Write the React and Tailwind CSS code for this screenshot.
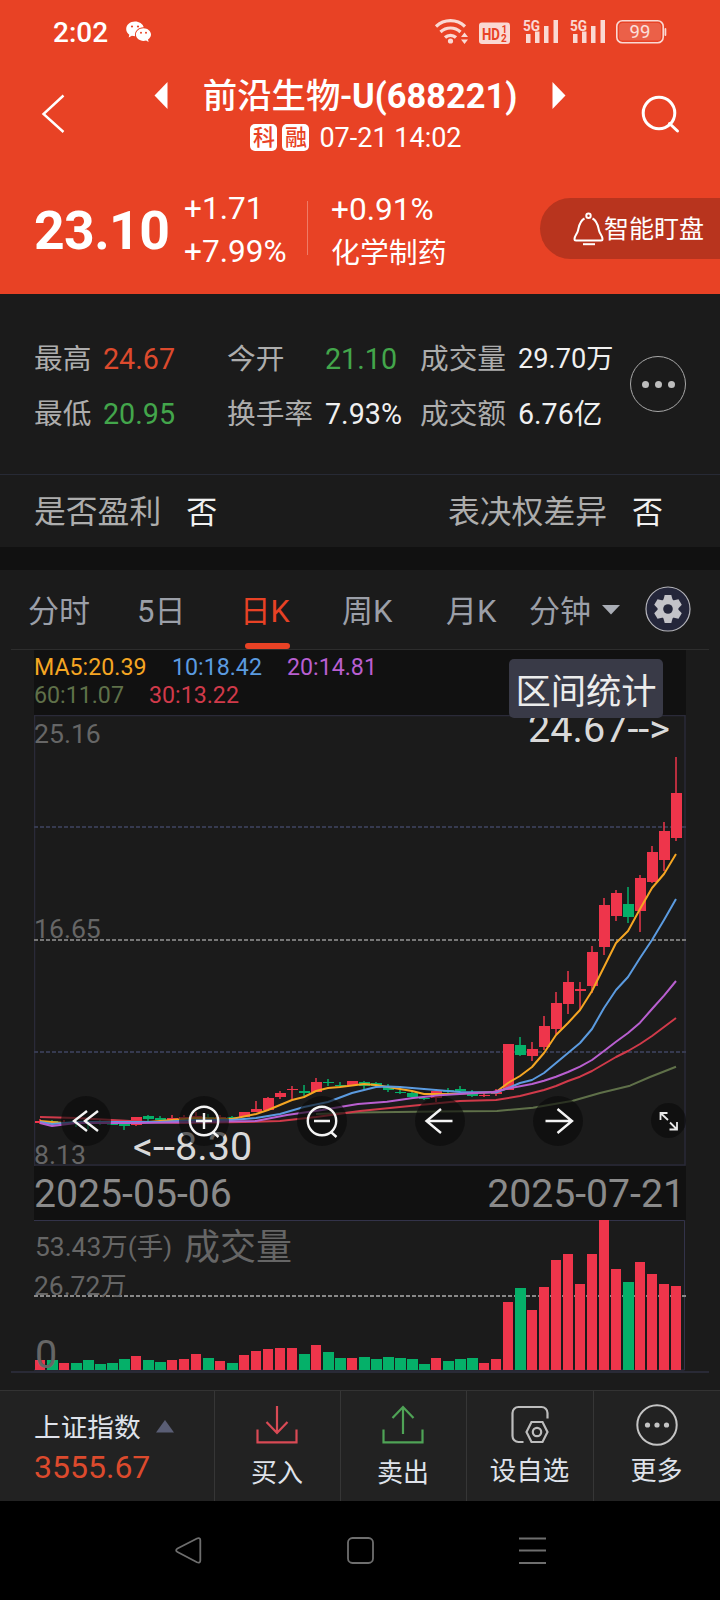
const UP = "#ee354b";
const DOWN = "#05b069";

// [up, bodyTop, bodyBottom, wickTop, wickBottom, volumeHeight]
const days = [
  [1, 1121, 1123, 1119, 1124, 10],
  [0, 1121, 1123, 1120, 1124, 10],
  [1, 1122, 1124, 1120, 1125, 7],
  [0, 1121, 1123, 1119, 1127, 7],
  [0, 1122, 1124, 1120, 1129, 10],
  [0, 1122, 1124, 1120, 1125, 6],
  [0, 1123, 1125, 1121, 1125, 7],
  [0, 1124, 1126, 1122, 1130, 11],
  [1, 1117, 1125, 1117, 1126, 14],
  [0, 1116, 1119, 1115, 1121, 10],
  [0, 1118, 1120, 1116, 1121, 8],
  [1, 1118, 1120, 1115, 1121, 10],
  [1, 1117, 1119, 1115, 1120, 11],
  [1, 1116, 1119, 1112, 1120, 16],
  [0, 1117, 1119, 1114, 1121, 12],
  [1, 1117, 1119, 1115, 1120, 9],
  [0, 1117, 1119, 1116, 1120, 7],
  [1, 1112, 1117, 1112, 1117, 15],
  [1, 1109, 1112, 1101, 1112, 19],
  [1, 1098, 1110, 1097, 1111, 21],
  [1, 1093, 1097, 1091, 1099, 22],
  [1, 1089, 1090, 1086, 1099, 22],
  [0, 1091, 1093, 1085, 1096, 16],
  [1, 1082, 1092, 1078, 1092, 25],
  [0, 1082, 1083, 1079, 1086, 18],
  [0, 1085, 1086, 1082, 1087, 12],
  [1, 1081, 1085, 1081, 1086, 12],
  [0, 1082, 1086, 1081, 1089, 13],
  [0, 1083, 1086, 1082, 1087, 11],
  [0, 1087, 1090, 1084, 1092, 13],
  [0, 1092, 1093, 1090, 1094, 12],
  [0, 1093, 1097, 1092, 1099, 11],
  [0, 1098, 1099, 1096, 1100, 6],
  [1, 1091, 1098, 1091, 1102, 12],
  [0, 1090, 1092, 1088, 1093, 9],
  [0, 1089, 1091, 1086, 1092, 11],
  [0, 1092, 1096, 1090, 1097, 12],
  [1, 1095, 1096, 1093, 1097, 7],
  [1, 1092, 1094, 1089, 1096, 11],
  [1, 1044, 1090, 1044, 1090, 68],
  [0, 1045, 1055, 1037, 1056, 82],
  [1, 1049, 1056, 1042, 1061, 60],
  [1, 1026, 1047, 1016, 1050, 83],
  [1, 1003, 1029, 992, 1034, 110],
  [1, 982, 1004, 971, 1014, 116],
  [1, 989, 991, 982, 1010, 86],
  [1, 952, 986, 946, 993, 116],
  [1, 905, 947, 898, 955, 150],
  [1, 893, 916, 890, 921, 101],
  [0, 904, 917, 887, 923, 88],
  [1, 878, 911, 875, 932, 108],
  [1, 852, 882, 846, 883, 96],
  [1, 831, 860, 822, 871, 86],
  [1, 793, 838, 757, 841, 84],
];

const averages = [
  {
    name: "ma60",
    color: "#5f7049",
    points:
      "316,1114 358,1112.5 436,1111.5 497,1111 533,1107.7 573,1100.7 600,1093 630,1085.7 650,1077 676,1066.7",
  },
  {
    name: "ma30",
    color: "#d03a4a",
    points:
      "40,1117 76,1118 112,1120 148,1122 184,1123 244,1122 280,1121 316,1117 360,1111 400,1107 430,1104 460,1101 496,1100 520,1096 544,1090 556,1086 568,1081 580,1076.7 592,1071 604,1064 616,1057 628,1051 640,1044 652,1036 664,1027 676,1018",
  },
  {
    name: "ma5",
    color: "#f5a623",
    points:
      "40,1121 64,1123 88,1123 112,1122 148,1122 172,1120 196,1118 232,1119 256,1114 268,1110 280,1105 292,1100 304,1097 316,1091 328,1088 340,1087 352,1085.5 364,1084 376,1085 388,1087 400,1089 412,1091 424,1094 448,1094 472,1093 496,1092 508,1083 520,1076 532,1067 544,1053 556,1035 568,1023 580,1010 592,991 604,967 616,943 628,931 640,909 652,888 664,874 676,854",
  },
  {
    name: "ma10",
    color: "#5b9be0",
    points:
      "40,1122 52,1124 76,1122 112,1122 160,1122 196,1120 232,1120 256,1118 280,1114 304,1107 328,1102 352,1093 376,1087 388,1086.5 400,1087 412,1088 436,1090 460,1092 496,1092.5 508,1088 520,1083 532,1080 544,1073 556,1063 568,1053 580,1043 592,1029 604,1008 616,990 628,977 640,958 652,940 664,920 676,899",
  },
  {
    name: "ma20",
    color: "#b95fd0",
    points:
      "40,1123 52,1126 76,1123 140,1123 200,1122 256,1121 287,1115 322,1110 358,1104 387,1101.7 413,1098 443,1095 493,1092 508,1088.5 532,1084 544,1080.7 556,1076.7 568,1072 580,1066.7 592,1060 604,1051 616,1041.7 628,1033 640,1022.7 652,1009 664,995.7 676,981",
  },
];

const chartTools = [
  {
    name: "rewind",
    x: "left-[27px]",
    icon: <path d="M26 15 13 25l13 10M37 15 24 25l13 10" />,
  },
  {
    name: "zoom-in",
    x: "left-[145px]",
    icon: (
      <>
        <circle cx="25" cy="25" r="14.2" />
        <path d="M34.5 36.5l5 4.5M17 25h16M25 17v16" />
      </>
    ),
  },
  {
    name: "zoom-out",
    x: "left-[263px]",
    icon: (
      <>
        <circle cx="25" cy="25" r="14.2" />
        <path d="M34.5 36.5l5 4.5M17 25h16" />
      </>
    ),
  },
  {
    name: "left",
    x: "left-[381px]",
    icon: <path d="M37.5 25H11.5M26 13 11.5 25 26 37" />,
  },
  {
    name: "right",
    x: "left-[499px]",
    icon: <path d="M12.500 25h26M24.500 13 39 25 24.500 37" />,
  },
];

const StatusIcons = () => (
  <svg width="240" height="36" viewBox="430 14 240 36" className="text-white/80">
    {/* Wifi */}
    <g fill="none" stroke="currentColor" strokeWidth="3.2">
      <path d="M436 26.500a21 21 0 0 1 29 0" />
      <path d="M440.500 32a14.500 14.500 0 0 1 20 0" />
      <path d="M445 37.500a8 8 0 0 1 11 0" />
    </g>
    <circle cx="450.5" cy="41" r="2.6" fill="currentColor" />
    <path d="M461 37l3.500-4.500L468 37zM461 39.500l3.500 4.500 3.500-4.500z" fill="currentColor" />
    {/* HD badge */}
    <rect x="479" y="22.5" width="31" height="21.5" rx="3" fill="currentColor" />
    <g fill="#e84225" fontWeight="700">
      <text x="482" y="39.5" fontSize="17" textLength="18" lengthAdjust="spacingAndGlyphs">HD</text>
      <text x="501.5" y="32.5" fontSize="10">1</text>
      <text x="501" y="42" fontSize="10">2</text>
    </g>
    {/* Signal bars */}
    {[0, 47].map((dx) => (
      <g key={dx} transform={`translate(${dx} 0)`} fill="currentColor">
        <text x="523" y="30.5" fontSize="15.5" fontWeight="700" textLength="17" lengthAdjust="spacingAndGlyphs">
          5G
        </text>
        <rect x="526" y="34" width="4.5" height="9" />
        <rect x="535" y="31.5" width="4.5" height="11.5" />
        <rect x="544" y="26" width="4.5" height="17" />
        <rect x="553.5" y="20" width="4.5" height="23" />
      </g>
    ))}
    {/* Battery */}
    <rect x="616.8" y="20.8" width="46.4" height="22" rx="5.5" fill="none" stroke="currentColor" strokeWidth="1.6" />
    <rect x="619" y="23" width="42" height="17.5" rx="3.5" fill="#fff" opacity="0.16" />
    <rect x="664.5" y="28" width="1.8" height="8" rx="0.9" fill="currentColor" />
    <text x="640" y="38.2" fontSize="18.5" textAnchor="middle" fill="currentColor">99</text>
  </svg>
);

const WechatIcon = () => (
  <svg width="26" height="22" viewBox="0 0 26 22" fill="#fff">
    <path d="M9 .5C4 .5.2 3.800.2 8c0 2.300 1.200 4.300 3.100 5.700L2.700 16.500l3.200-1.700c1 .3 2 .4 3.200.4-1-5 3.500-9.200 8.600-9C16.800 2.800 13.200.5 9 .5z" />
    <path d="M17.500 7.300c-4.300 0-7.600 2.900-7.600 6.300s3.300 6.300 7.600 6.300c.9 0 1.800-.1 2.600-.4l2.500 1.500-.6-2.400c1.800-1.200 3-3 3-5 0-3.400-3.300-6.300-7.500-6.300z" />
    <g fill="#e84225">
      <circle cx="6" cy="5.500" r="1.100" />
      <circle cx="12" cy="5.500" r="1.100" />
      <circle cx="15" cy="11.700" r="1" />
      <circle cx="20" cy="11.700" r="1" />
    </g>
  </svg>
);

const Header = () => (
  <header className="h-[294px] bg-[#e84225] text-white">
    <div className="h-[64px] pl-[53px] flex items-center">
      <span className="pt-[2px] text-[28px] leading-none font-medium">2:02</span>
      <span className="ml-[18px]">
        <WechatIcon />
      </span>
      <span className="ml-auto mr-[50px]">
        <StatusIcons />
      </span>
    </div>

    <div className="h-[102px] pt-2 flex items-start justify-between">
      <svg width="80" height="84" viewBox="0 72 80 84" fill="none" stroke="#fff" strokeWidth="2.4">
        <path d="M63.5 95.500 43.500 114l20 18" />
      </svg>

      <div className="pt-[4px] flex flex-col items-center">
        <div className="h-[41px] flex items-center gap-[35px]">
          <svg width="14" height="27" viewBox="0 0 14 27" fill="#fff" className="-mt-[3px]">
            <path d="M13.500 0v27L.5 13.500z" />
          </svg>
          <h1 className="text-[34.4px] leading-none font-bold whitespace-nowrap">
            <span className="font-medium">前沿生物-</span>U(688221)
          </h1>
          <svg width="14" height="27" viewBox="0 0 14 27" fill="#fff" className="-mt-[3px]">
            <path d="M.5 0v27l13-13.500z" />
          </svg>
        </div>
        <div className="h-[41px] mr-[8px] flex items-center gap-[5px] text-[27px] leading-none">
          <span className="w-[27px] h-[27px] rounded-[5px] bg-white text-[#e84225] text-[22px] font-medium flex items-center justify-center">
            科
          </span>
          <span className="w-[27px] h-[27px] rounded-[5px] bg-white text-[#e84225] text-[22px] font-medium flex items-center justify-center">
            融
          </span>
          <span className="ml-[5px] pt-[2px]">07-21 14:02</span>
        </div>
      </div>

      <svg width="80" height="84" viewBox="640 72 80 84" fill="none" stroke="#fff" strokeWidth="3">
        <circle cx="659" cy="113" r="15.800" />
        <path d="M669.500 123.500l8 7.500" strokeLinecap="round" />
      </svg>
    </div>

    <div className="h-[128px] pl-[34px] pt-[21px] flex items-start">
      <div className="w-[150px] h-[88px] flex items-center text-[53.500px] tracking-[-0.6px] leading-none font-bold">
        23.10
      </div>
      <div className="w-[123px] text-[31.600px] leading-[43px]">
        <p>+1.71</p>
        <p>+7.99%</p>
      </div>
      <div className="w-px h-[54px] mt-[14px] bg-white/30"></div>
      <div className="ml-[23px] w-[209px] text-[31.600px] leading-[43px]">
        <p className="pt-px">+0.91%</p>
        <p className="pt-px text-[28.900px]">化学制药</p>
      </div>
      <div className="flex-1 h-[61px] mt-[11px] rounded-l-full bg-[#b8341e] pl-[33px] flex items-center whitespace-nowrap">
        <svg width="31" height="34" viewBox="573 211 31 34" fill="none" stroke="#fff" strokeWidth="2">
          <circle cx="588.500" cy="214.800" r="2.200" />
          <path d="M584.500 217.500c-5 2.500-5.500 8-6.500 12-.8 3.500-3.500 5.500-3.500 8.500 0 1 .5 1.500 1.500 1.500h25c1 0 1.500-.5 1.500-1.500 0-3-2.700-5-3.500-8.500-1-4-1.500-9.500-6.500-12" />
          <path d="M583 243.200h12" />
        </svg>
        <span className="pt-[2px] text-[25px] leading-none">智能盯盘</span>
      </div>
    </div>
  </header>
);

const statRows = [
  ["最高", "24.67", "text-[#dc4a2d]", "今开", "21.10", "text-[#43a64b]", "成交量", "29.70万", "text-[27.2px]"],
  ["最低", "20.95", "text-[#43a64b]", "换手率", "7.93%", "text-[#f0f0f0]", "成交额", "6.76亿", "text-[28.6px]"],
];

const Summary = () => (
  <section className="bg-[#1b1b1b]">
    <div className="h-[180px] pl-[34px] flex">
      <div className="w-[596px] pt-[38px]">
        {statRows.map((row) => (
          <div
            key={row[0]}
            className="h-[55px] flex items-center text-[28.700px] leading-none text-[#adadad] whitespace-nowrap"
          >
            <span className="w-[69px]">{row[0]}</span>
            <span className={`w-[124px] ${row[2]}`}>{row[1]}</span>
            <span className="w-[98px]">{row[3]}</span>
            <span className={`w-[95px] ${row[5]}`}>{row[4]}</span>
            <span className="w-[98px]">{row[6]}</span>
            <span className={`text-[#f0f0f0] ${row[8]}`}>{row[7]}</span>
          </div>
        ))}
      </div>
      <div className="mt-[62px] w-[56px] h-[56px] rounded-full border border-[#a8a8a8] flex items-center justify-center gap-[6px]">
        <i className="w-[7px] h-[7px] rounded-full bg-[#bdbdbd]"></i>
        <i className="w-[7px] h-[7px] rounded-full bg-[#bdbdbd]"></i>
        <i className="w-[7px] h-[7px] rounded-full bg-[#bdbdbd]"></i>
      </div>
    </div>
    <div className="h-[73px] pt-[4px] border-t border-[#272a35] pl-[34px] pr-[57px] flex items-center justify-between text-[31.800px] leading-none text-[#adadad]">
      <p>
        是否盈利<span className="ml-[25px] text-[31px] text-[#f0f0f0]">否</span>
      </p>
      <p>
        表决权差异<span className="ml-[25px] text-[31px] text-[#f0f0f0]">否</span>
      </p>
    </div>
  </section>
);

const Tabs = () => (
  <nav className="mx-[11px] h-[80px] border-b border-[#2d2d2d] flex text-[31px] leading-[84px] text-[#9b9fa8] whitespace-nowrap">
    <span className="ml-[17px] w-[109px]">分时</span>
    <span className="w-[103px]">5日</span>
    <span className="w-[102px] text-[#e84225] flex flex-col h-[80px]">
      <span className="h-[73px] text-[30.500px]">日K</span>
      <i className="ml-[5px] w-[45px] h-[6px] shrink-0 rounded-full bg-[#e84225]"></i>
    </span>
    <span className="w-[104px]">周K</span>
    <span className="w-[83px]">月K</span>
    <span className="w-[73px]">分钟</span>
    <svg width="18" height="10" viewBox="0 0 18 10" className="mt-[35px]" fill="#a9adb5">
      <path d="M0 0h18L9 9.500z" />
    </svg>
    <svg width="46" height="46" viewBox="-23 -23 46 46" className="ml-[25px] mt-[16px] shrink-0">
      <circle r="22" fill="#24263a" stroke="#b5b5bb" strokeWidth="1.2" />
      <g fill="#c3c3c8">
        {[0, 60, 120].map((deg) => (
          <path key={deg} d="M-4.500 -9.500 -3.300 -14h6.600l1.200 4.500v19l-1.200 4.500h-6.600l-1.200-4.500z" transform={`rotate(${deg})`} />
        ))}
        <circle r="10.4" />
      </g>
      <circle r="4.8" fill="#24263a" />
    </svg>
  </nav>
);

const CandleChart = () => (
  <svg width="652" height="451" viewBox="34 715 652 451" className="block bg-[#1b1b1b]">
    <path d="M34.500 1166V715.500H685v449.500H34.500" fill="none" stroke="#2a2a38" strokeWidth="1.5" />
    <g strokeWidth="1.8" strokeDasharray="4 2">
      <path d="M34 827h652M34 1052h652" stroke="#363a50" />
      <path d="M34 940h652" stroke="#777" />
    </g>
    <g fill="#666" fontSize="26.6">
      <text x="34" y="742.5">25.16</text>
      <text x="34" y="937.5">16.65</text>
      <text x="34" y="1164">8.13</text>
    </g>
    {days.map(([up, top, bottom, high, low], i) => (
      <g key={i} fill={up ? UP : DOWN}>
        <rect x={39 + i * 12} y={high} width="2" height={low - high} opacity="0.75" />
        <rect x={35 + i * 12} y={top} width="11" height={bottom - top} />
      </g>
    ))}
    {averages.map((line) => (
      <polyline key={line.name} points={line.points} fill="none" stroke={line.color} strokeWidth="2" strokeLinejoin="round" />
    ))}
    <g fill="#d9d9d9" fontSize="39.6">
      <text x="528" y="742">24.67--&gt;</text>
      <text x="133" y="1160">&lt;--8.30</text>
    </g>
  </svg>
);

const VolumeChart = () => (
  <svg width="652" height="151" viewBox="34 1220 652 151" className="block bg-[#1b1b1b]">
    <path d="M34 1220.500h650.500V1370H34" fill="none" stroke="#33334a" />
    <path d="M34 1296h652" stroke="#888" strokeWidth="1.8" strokeDasharray="4 2" />
    {days.map((day, i) => (
      <rect
        key={i}
        x={35 + i * 12}
        y={1370 - day[5]}
        width={day[0] ? 10 : 11}
        height={day[5]}
        fill={day[0] ? UP : DOWN}
      />
    ))}
    <g fill="#666">
      <text x="35" y="1255.500" fontSize="26.4">53.43万(手)</text>
      <text x="184" y="1260" fontSize="36">成交量</text>
      <text x="34" y="1295" fontSize="26.4">26.72万</text>
      <text x="35" y="1367.500" fontSize="39.5">0</text>
    </g>
  </svg>
);

const Chart = () => (
  <section className="relative mx-[34px] w-[652px]">
    <div className="h-[65px] bg-[#111] text-[23.200px] leading-[28px] pt-[3px]">
      <div className="flex">
        <span className="w-[138px] text-[#f5a623]">MA5:20.39</span>
        <span className="w-[115px] text-[#5b9be0]">10:18.42</span>
        <span className="text-[#b95fd0]">20:14.81</span>
      </div>
      <div className="flex">
        <span className="w-[115px] text-[#5f7049]">60:11.07</span>
        <span className="text-[#d03a4a]">30:13.22</span>
      </div>
    </div>
    <CandleChart />
    <div className="h-[54px] pt-[4px] bg-[#111] pr-[1px] flex items-center justify-between text-[39.200px] leading-none text-[#8a8a8a]">
      <span>2025-05-06</span>
      <span>2025-07-21</span>
    </div>
    <VolumeChart />

    {/* Range statistics popup */}
    <div className="absolute left-[475px] top-[9px] w-[154px] h-[59px] rounded-[5px] bg-[#393a47] text-[#ececec] text-[35.300px] leading-[66px] text-center">
      区间统计
    </div>

    {/* Floating chart controls */}
    {chartTools.map((tool) => (
      <svg
        key={tool.name}
        width="50"
        height="50"
        viewBox="0 0 50 50"
        fill="none"
        stroke="#f4f4f4"
        strokeWidth="2.4"
        className={`absolute top-[446px] rounded-full bg-[#0a0a0a]/60 ${tool.x}`}
      >
        {tool.icon}
      </svg>
    ))}
    <svg
      width="35"
      height="35"
      viewBox="0 0 35 35"
      fill="none"
      stroke="#e8e8e8"
      strokeWidth="1.8"
      className="absolute left-[617px] top-[453px] rounded-full bg-[#0a0a0a]/60"
    >
      <path d="M9.500 17V10h7M9.500 10l7.500 7M19 19.500l7 7M26 19v7.500h-7.500" />
    </svg>
  </section>
);

const ACTION = "h-[110px] pr-px border-l border-[#363636] flex flex-col items-center text-[26px] leading-none text-[#dfe2ea]";

const BottomBar = () => (
  <footer className="h-[111px] bg-[#222] border-t border-[#333] grid grid-cols-[214px_126px_126px_127px_127px]">
    <div className="pl-[34px]">
      <div className="mt-[20px] h-[31px] flex items-center text-[26.700px] leading-none text-[#dfe2ea]">
        <span className="pt-[3px]">上证指数</span>
        <svg width="18" height="13" viewBox="0 0 18 13" className="ml-[15px]" fill="#5a5e75">
          <path d="M9 0l9 12.500H0z" />
        </svg>
      </div>
      <div className="mt-[8px] text-[32px] leading-[34px] text-[#dc4a2d]">3555.67</div>
    </div>

    <div className={ACTION}>
      <svg width="42" height="40" viewBox="0 0 42 40" fill="none" stroke="#d94a55" strokeWidth="2.2" className="mt-[14px] mb-[15px]">
        <path d="M21 1v27M10.500 17 21 28l10.500-11M1.500 24.500V37.300h39V24.500" />
      </svg>
      买入
    </div>
    <div className={ACTION}>
      <svg width="42" height="40" viewBox="0 0 42 40" fill="none" stroke="#4fa356" strokeWidth="2.2" className="mt-[14px] mb-[15px]">
        <path d="M21 29V2M10.500 13 21 2l10.500 11M1.500 24.500V37.300h39V24.500" />
      </svg>
      卖出
    </div>
    <div className={ACTION}>
      <svg width="40" height="40" viewBox="0 0 40 40" fill="none" stroke="#bdbdbd" strokeWidth="2.2" className="mt-[14px] mb-[13px]">
        <path d="M13.500 37H8.500a6 6 0 0 1-6-6V8a6 6 0 0 1 6-6h23a6 6 0 0 1 6 6v5.500" />
        <path d="M21.500 17h11l5 10-5 10h-11l-5-10z" />
        <circle cx="27" cy="27" r="4.2" />
      </svg>
      <span className="text-[26.500px]">设自选</span>
    </div>
    <div className={ACTION}>
      <svg width="42" height="42" viewBox="0 0 42 42" fill="none" stroke="#c4c4c4" strokeWidth="2" className="mt-[13px] mb-[12px]">
        <circle cx="21" cy="21" r="19.700" />
        <g fill="#c4c4c4" stroke="none">
          <circle cx="11.500" cy="21" r="2.600" />
          <circle cx="21" cy="21" r="2.600" />
          <circle cx="30.500" cy="21" r="2.600" />
        </g>
      </svg>
      更多
    </div>
  </footer>
);

const SystemNav = () => (
  <div className="h-[99px] bg-black flex justify-center">
    <svg width="380" height="99" viewBox="170 1501 380 99" fill="none" stroke="#6e6e6e" strokeWidth="1.8">
      <path d="M197 1538.500 177.500 1548.500c-1.800 1-1.800 2.500 0 3.500l19.500 10.300c2 .9 3.300.2 3.300-1.800v-20.200c0-2-1.300-2.800-3.300-1.800z" />
      <rect x="348" y="1538" width="25" height="25" rx="4.500" />
      <path d="M519 1538.500h27M519 1550.500h27M519 1563h27" />
    </svg>
  </div>
);

const App = () => {
  return (
    <div className="w-[720px] h-[1600px] overflow-hidden bg-[#1b1b1b] font-[Roboto,'Noto_Sans_CJK_SC',sans-serif]">
      <Header />
      <Summary />
      <div className="h-[23px] bg-[#111]"></div>
      <Tabs />
      <Chart />
      <div className="mx-[11px] mb-[17px] h-[2px] bg-[#292a36]"></div>
      <BottomBar />
      <SystemNav />
    </div>
  );
};

export default App;
